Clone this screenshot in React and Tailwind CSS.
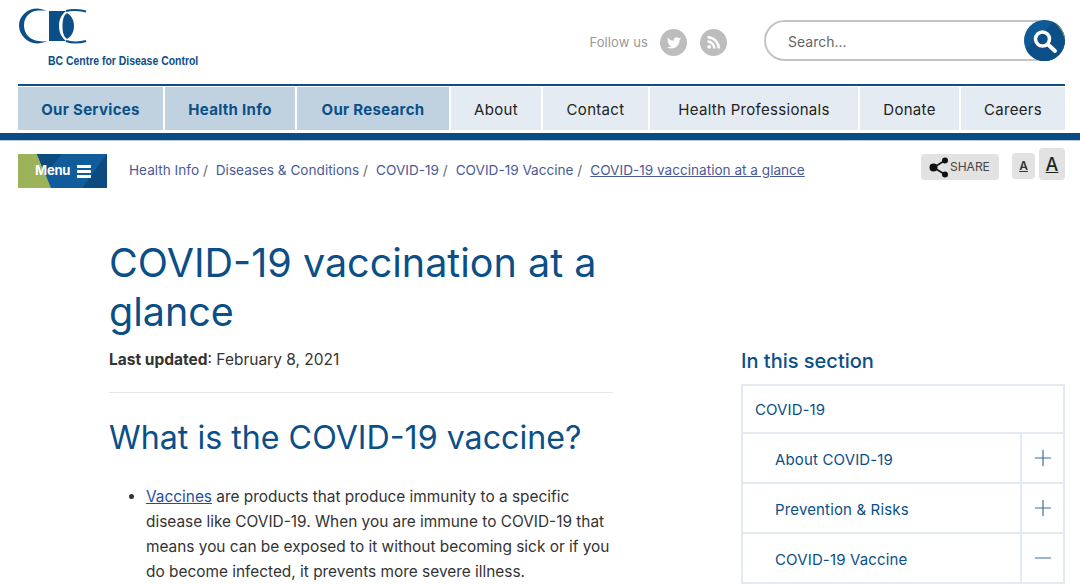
import React from "react";
import { Plus, Minus } from "lucide-react";

const mainNav = [
  { label: "Our Services", w: "w-[145px]", strong: true },
  { label: "Health Info", w: "w-[130px]", strong: true },
  { label: "Our Research", w: "w-[152px]", strong: true },
  { label: "About", w: "w-[90px]" },
  { label: "Contact", w: "w-[105px]" },
  { label: "Health Professionals", w: "w-[208px]" },
  { label: "Donate", w: "w-[99px]" },
  { label: "Careers", w: "flex-1" },
];

const crumbs = ["Health Info", "Diseases & Conditions", "COVID-19", "COVID-19 Vaccine"];

const Logo = () => (
  <svg width="70" height="36" viewBox="0 0 70 36" className="block">
    <path d="M29 3 C25.500 1.500 22 .5 19 .5 C9.500 .5 1 8 1 17.500 C1 27 9.500 35.500 19 35.500 C22.500 35.500 26 34.500 29 33 C26 33.500 23.500 33.500 20.500 33 C12 32 6 26 6 17.500 C6 9 12 3 20 2.600 C23.500 2.400 26 2.500 29 3 Z" fill="#0b4f88" />
    <path d="M31 3 H48 C43 7 41 12 41 18 C41 24 43 29 48 33 H31 Z" fill="#0b4f88" />
    <path d="M49 5 C54 8 56 13 56 18 C56 23 54 28 49 31 C45 28 44.500 23 44.500 18 C44.500 13 45 8 49 5 Z" fill="#0b4f88" />
    <path d="M48 3 C53 1.500 62 1.500 68 3.500" fill="none" stroke="#0b4f88" strokeWidth="2" />
    <path d="M48 33 C53 35 62 35 68 33" fill="none" stroke="#0b4f88" strokeWidth="2" />
  </svg>
);

const Twitter = () => (
  <svg width="14" height="12" viewBox="0 0 24 20" fill="#fff">
    <path d="M24 2.4c-.9.4-1.8.7-2.8.8 1-.6 1.8-1.6 2.2-2.7-1 .6-2 1-3.1 1.2A4.9 4.9 0 0 0 11.900 6.200C7.800 6 4.200 4 1.700.9c-1.300 2.200-.7 5.100 1.500 6.600-.8 0-1.600-.2-2.200-.6 0 2.400 1.700 4.400 3.900 4.900-.7.200-1.500.2-2.200.1.600 1.900 2.400 3.300 4.600 3.400A9.900 9.900 0 0 1 0 17.300 14 14 0 0 0 7.500 19.500c9.100 0 14.300-7.700 14-14.600 1-.7 1.800-1.500 2.500-2.500z" />
  </svg>
);

const Rss = () => (
  <svg width="13" height="13" viewBox="0 0 24 24" fill="#fff">
    <circle cx="4" cy="20" r="3.500" />
    <path d="M1 8v4.500A10.500 10.500 0 0 1 11.500 23H16A15 15 0 0 0 1 8z" />
    <path d="M1 0v4.500A18.500 18.500 0 0 1 19.500 23H24A23 23 0 0 0 1 0z" />
  </svg>
);

const SearchButton = () => (
  <div className="absolute right-[-2px] top-[-2px] w-[41px] h-[41px] rounded-full overflow-hidden bg-[#0f5a96]">
    <svg width="41" height="41" viewBox="0 0 41 41" className="block">
      <path d="M0 32 L32 0 H41 V41 H0 Z" fill="#0c4f87" />
      <path d="M27 0 C34 4 39 11 41 20 L41 0 Z" fill="#9db35b" />
      <circle cx="18.500" cy="19" r="7" fill="none" stroke="#fff" strokeWidth="3.500" />
      <path d="M24 24.500 L31 31" stroke="#fff" strokeWidth="4" strokeLinecap="round" />
    </svg>
  </div>
);

const MenuButton = () => (
  <div className="relative w-[89px] h-[34px] overflow-hidden bg-[#9db35b] flex items-center">
    <svg width="89" height="34" viewBox="0 0 89 34" className="absolute inset-0">
      <path d="M19 0 H89 V34 H33 Z" fill="#115c9a" />
      <path d="M19 0 H44 L27 20 Z" fill="#0d4a80" />
      <path d="M89 0 V34 H64 Z" fill="#0d4a80" />
    </svg>
    <span className="relative ml-[17px] text-[13px] font-bold text-white tracking-[-0.2px]">Menu</span>
    <span className="relative ml-[7px] w-[14px] flex flex-col gap-[2px]">
      <span className="h-[3px] bg-white" />
      <span className="h-[3px] bg-white" />
      <span className="h-[3px] bg-white" />
    </span>
  </div>
);

const ShareIcon = () => (
  <svg width="20" height="21" viewBox="0 0 20 21" fill="#111">
    <circle cx="4.500" cy="10.500" r="4" />
    <circle cx="16" cy="3.500" r="3" />
    <circle cx="16" cy="17.500" r="3" />
    <path d="M4.500 10.500 L16 3.500 M4.500 10.500 L16 17.500" stroke="#111" strokeWidth="1.500" />
  </svg>
);

const SectionRow = ({ label, icon }) => (
  <div className="flex h-[50px] border-b-2 border-[#e3eaf2]">
    <div className="flex-1 pl-[32px] pt-[4px] flex items-center text-[15px] tracking-[0.15px] text-[#0b4f88]">{label}</div>
    <div className="w-[43px] border-l-2 border-[#e3eaf2] flex items-center justify-center text-[#3f6f9c]">
      {icon === "plus" ? <Plus size={26} strokeWidth={1.1} /> : <Minus size={26} strokeWidth={1.1} />}
    </div>
  </div>
);

const App = () => {
  return (
    <div className="w-[1080px] h-[585px] overflow-hidden bg-white font-['Inter',sans-serif] text-[#333]">
      <header className="h-[84px] pl-[18px] pr-[15px] flex justify-between">
        <div className="pt-[8px]">
          <Logo />
          <div className="ml-[30px] mt-[10px] origin-left scale-x-[0.87] text-[12px] leading-[14px] font-bold text-[#0b4f88] font-['Liberation_Sans',sans-serif] whitespace-nowrap">
            BC Centre for Disease Control
          </div>
        </div>
        <div className="flex items-start pt-[20px]">
          <span className="mt-[14px] text-[13px] leading-[16px] tracking-[0.1px] text-[#999]">Follow us</span>
          <span className="ml-[12px] mt-[9px] w-[27px] h-[27px] rounded-full bg-[#bdbdbd] flex items-center justify-center"><Twitter /></span>
          <span className="ml-[13px] mt-[9px] w-[27px] h-[27px] rounded-full bg-[#bdbdbd] flex items-center justify-center"><Rss /></span>
          <div className="relative ml-[37px] w-[301px] h-[41px] rounded-full border-2 border-[#c4c4c4] flex items-center pl-[22px] pt-[2px] text-[14px] text-[#666]">
            Search...
            <SearchButton />
          </div>
        </div>
      </header>

      <div className="mx-[18px] w-[1047px] border-t-2 border-[#0b4f88] pt-[1px]">
        <nav className="flex h-[43px] gap-[2px]">
          {mainNav.map((item) => (
            <div
              key={item.label}
              className={`${item.w} flex items-center justify-center pt-[3px] text-[15px] whitespace-nowrap ${
                item.strong ? "bg-[#c0d2e0] font-bold tracking-[0.3px] text-[#0b4f88]" : "bg-[#e4ebf2] tracking-[0.3px] text-[#222]"
              }`}
            >
              {item.label}
            </div>
          ))}
        </nav>
      </div>
      <div className="mt-[3px] h-[8px] bg-[#0b4b84] border-b border-[#b9cbdc]" />

      <div className="pl-[18px] pr-[15px] flex items-start h-[48px]">
        <div className="pt-[13px]"><MenuButton /></div>
        <div className="ml-[22px] pt-[20px] flex text-[13.600px] leading-[18px] text-[#4a5a96] whitespace-nowrap">
          {crumbs.map((c) => (
            <span key={c} className="mr-[8px]">
              {c} <span className="text-[#666]">/</span>
            </span>
          ))}
          <span className="underline">COVID-19 vaccination at a glance</span>
        </div>
        <div className="ml-auto flex items-start pt-[7px]">
          <div className="mt-[6px] w-[78px] h-[26px] bg-[#e2e2e2] rounded-[4px] flex items-center pl-[8px] text-[12px] text-[#444]">
            <ShareIcon />
            <span className="ml-[1px]">SHARE</span>
          </div>
          <div className="ml-[13px] mt-[5px] w-[23px] h-[26px] bg-[#e2e2e2] rounded-[4px] flex items-center justify-center text-[12px] font-semibold underline text-[#333]">A</div>
          <div className="ml-[4px] w-[26px] h-[32px] bg-[#e2e2e2] rounded-[4px] flex items-center justify-center text-[18px] font-medium underline text-[#222]">A</div>
        </div>
      </div>

      <div className="flex pl-[109px] pr-[15px]">
        <main className="w-[504px] pt-[50px]">
          <h1 className="text-[39.500px] leading-[49px] text-[#0b4f88] font-normal">COVID-19 vaccination at a glance</h1>
          <p className="mt-[13px] text-[15.500px] leading-[20px] text-[#333]"><strong>Last updated</strong>: February 8, 2021</p>
          <hr className="mt-[22px] border-t border-[#e6e6e6]" />
          <h2 className="mt-[23px] text-[32.200px] leading-[44px] text-[#0b4f88] font-normal">What is the COVID-19 vaccine?</h2>
          <ul className="mt-[24px] pl-[37px] list-disc text-[15.400px] leading-[25px] text-[#333]">
            <li>
              <a className="underline text-[#1f4f9c]">Vaccines</a> are products that produce immunity to a specific disease like COVID-19. When you are immune to COVID-19 that means you can be exposed to it without becoming sick or if you do become infected, it prevents more severe illness.
            </li>
          </ul>
        </main>
        <aside className="ml-auto w-[324px] pt-[159px]">
          <h3 className="text-[20px] leading-[26px] font-medium text-[#0b4f88]">In this section</h3>
          <div className="mt-[10px] border-2 border-[#e3eaf2] border-b-0">
            <div className="h-[48px] pl-[12px] pt-[3px] flex items-center text-[15px] tracking-[0.1px] text-[#0b4f88] border-b-2 border-[#e3eaf2]">COVID-19</div>
            <SectionRow label="About COVID-19" icon="plus" />
            <SectionRow label="Prevention & Risks" icon="plus" />
            <SectionRow label="COVID-19 Vaccine" icon="minus" />
          </div>
        </aside>
      </div>
    </div>
  );
};

export default App;
